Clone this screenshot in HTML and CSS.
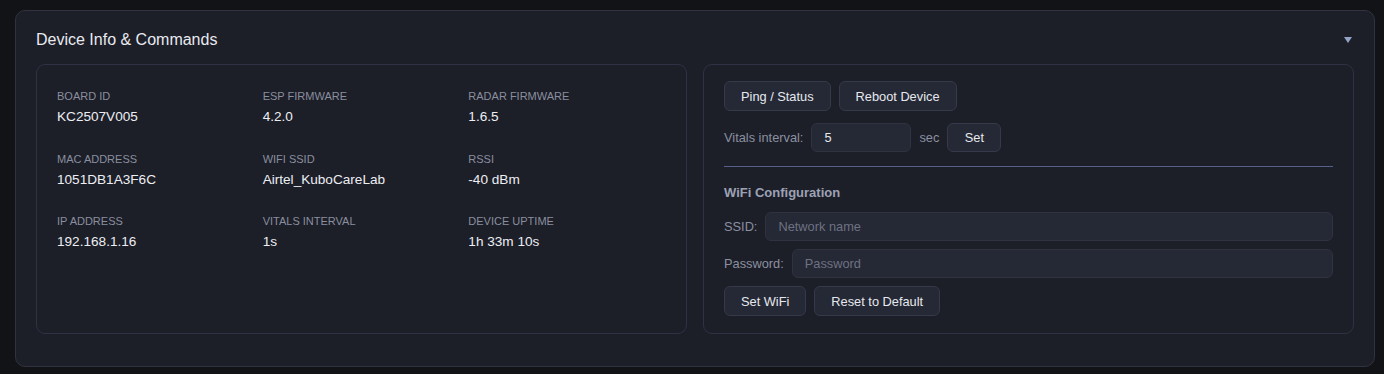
FILE: index.html
```html
<!DOCTYPE html>
<html lang="en">
<head>
<meta charset="utf-8">
<title>Device Info &amp; Commands</title>
<link rel="stylesheet" href="styles.css">
</head>
<body>
<div class="page">
  <section class="card">
    <header class="card-head">
      <h2 class="card-title">Device Info &amp; Commands</h2>
      <svg class="caret" width="8" height="6" viewBox="0 0 8 6" aria-hidden="true"><polygon points="0,0 8,0 4,6" fill="#93a3c6"/></svg>
    </header>
    <div class="card-body">
      <div class="panel info-grid">
        <div class="info-item"><div class="info-label">BOARD ID</div><div class="info-value">KC2507V005</div></div>
        <div class="info-item"><div class="info-label">ESP FIRMWARE</div><div class="info-value">4.2.0</div></div>
        <div class="info-item"><div class="info-label">RADAR FIRMWARE</div><div class="info-value">1.6.5</div></div>
        <div class="info-item"><div class="info-label">MAC ADDRESS</div><div class="info-value">1051DB1A3F6C</div></div>
        <div class="info-item"><div class="info-label">WIFI SSID</div><div class="info-value">Airtel_KuboCareLab</div></div>
        <div class="info-item"><div class="info-label">RSSI</div><div class="info-value">-40 dBm</div></div>
        <div class="info-item"><div class="info-label">IP ADDRESS</div><div class="info-value">192.168.1.16</div></div>
        <div class="info-item"><div class="info-label">VITALS INTERVAL</div><div class="info-value">1s</div></div>
        <div class="info-item"><div class="info-label">DEVICE UPTIME</div><div class="info-value">1h 33m 10s</div></div>
      </div>
      <div class="panel commands">
        <div class="row row-top">
          <button class="btn">Ping / Status</button>
          <button class="btn">Reboot Device</button>
        </div>
        <div class="row row-interval">
          <span class="field-label">Vitals interval:</span>
          <input class="input input-small" type="text" value="5">
          <span class="field-label">sec</span>
          <button class="btn btn-small">Set</button>
        </div>
        <hr class="divider">
        <div class="section-title">WiFi Configuration</div>
        <div class="row row-field">
          <span class="field-label">SSID:</span>
          <input class="input input-wide" type="text" placeholder="Network name">
        </div>
        <div class="row row-field">
          <span class="field-label">Password:</span>
          <input class="input input-wide" type="password" placeholder="Password">
        </div>
        <div class="row row-bottom">
          <button class="btn">Set WiFi</button>
          <button class="btn">Reset to Default</button>
        </div>
      </div>
    </div>
  </section>
</div>
</body>
</html>
```

FILE: styles.css
```css
* { box-sizing: border-box; }

html, body {
  margin: 0;
  padding: 0;
  background: #121317;
  font-family: "Liberation Sans", Arial, sans-serif;
  color: #e6e8ee;
}

.page {
  padding: 10px 9px 9px 15px;
}

.card {
  background: #1c1e28;
  border: 1px solid #30333f;
  border-radius: 10px;
  padding: 0 20px 32px;
}

.card-head {
  display: flex;
  align-items: center;
  justify-content: space-between;
  padding-top: 20px;
  margin-bottom: 15px;
}

.card-title {
  margin: 0;
  font-size: 16px;
  line-height: 18px;
  font-weight: 400;
  color: #e8eaf0;
}

.caret {
  display: block;
  margin-right: 2px;
}

.card-body {
  display: grid;
  grid-template-columns: 1fr 1fr;
  gap: 16px;
}

.panel {
  border: 1px solid #2f3244;
  border-radius: 9px;
  background: #1c1e28;
}

.info-grid {
  display: grid;
  grid-template-columns: repeat(3, 1fr);
  column-gap: 8px;
  row-gap: 25.5px;
  align-content: start;
  padding: 24px 20px;
}

.info-label {
  font-size: 11px;
  line-height: 14px;
  color: #8a8f9f;
}

.info-value {
  margin-top: 5px;
  font-size: 13.6px;
  line-height: 18px;
  color: #eceef3;
}

.commands {
  display: flex;
  flex-direction: column;
  padding: 16px 20px 17px;
}

.row {
  display: flex;
  align-items: center;
  gap: 8px;
}

.row-interval {
  margin-top: 12px;
}

.row-field {
  margin-top: 8px;
}

.section-title + .row-field {
  margin-top: 11px;
}

.row-bottom {
  margin-top: 8px;
}

.btn {
  height: 30px;
  padding: 0 16px;
  font-family: "Liberation Sans", Arial, sans-serif;
  font-size: 12.8px;
  color: #e6e8ee;
  background: #252835;
  border: 1px solid #353949;
  border-radius: 6px;
}

.btn-small {
  height: 29px;
  width: 54px;
  padding: 0;
}

.field-label {
  font-size: 12.8px;
  color: #8b90a0;
  white-space: nowrap;
}

.input {
  height: 29px;
  padding: 0 12px;
  font-family: "Liberation Sans", Arial, sans-serif;
  font-size: 12.8px;
  color: #e6e8ee;
  background: #252835;
  border: 1px solid #30333f;
  border-radius: 6px;
  outline: none;
}

.input::placeholder {
  color: #6e7282;
}

.input-small {
  width: 100px;
}

.input-wide {
  flex: 1;
  min-width: 0;
}

.divider {
  margin: 14px 0 0;
  border: 0;
  height: 1px;
  background: #56608a;
}

.section-title {
  margin-top: 18px;
  font-size: 13px;
  line-height: 16px;
  font-weight: 700;
  color: #9ca2b5;
}
```
